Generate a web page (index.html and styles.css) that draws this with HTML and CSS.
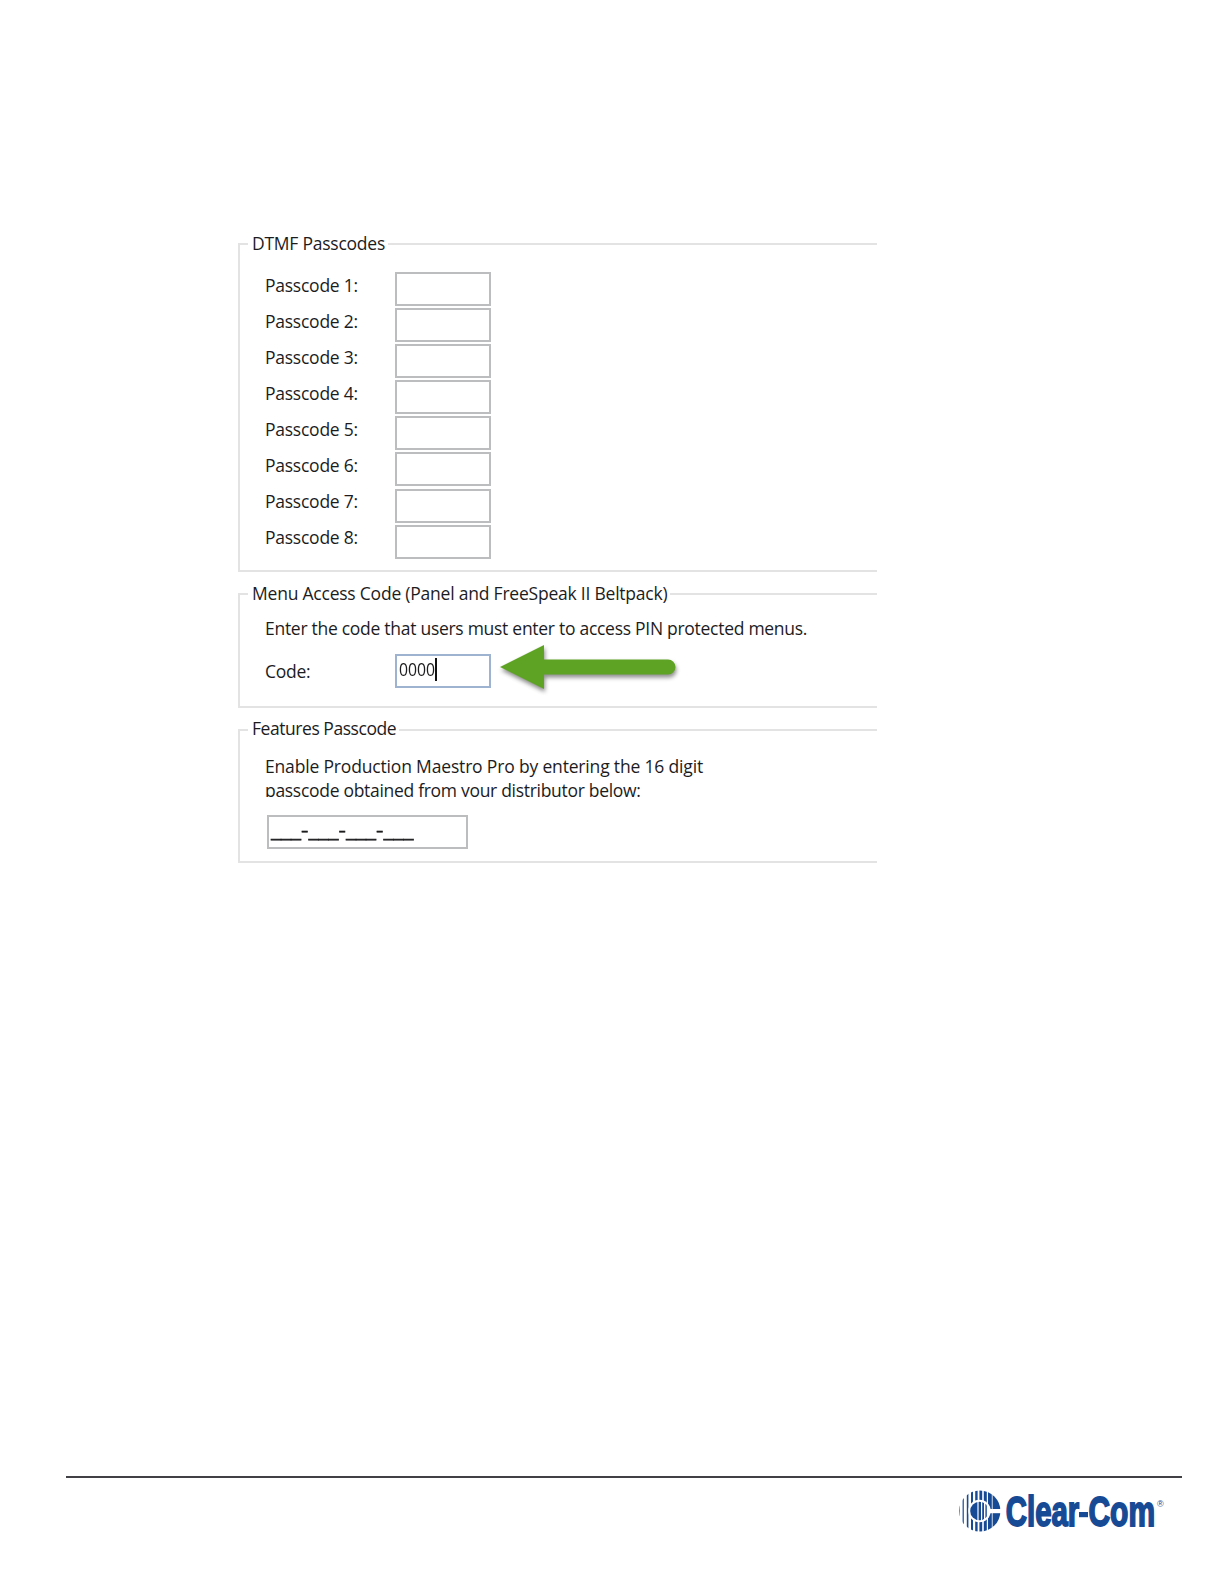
FILE: index.html
```html
<!DOCTYPE html>
<html lang="en">
<head>
  <meta charset="UTF-8">
  <meta name="viewport" content="width=device-width, initial-scale=1.0">
  <title>Clear-Com Passcodes</title>
  <link rel="stylesheet" href="styles.css">
</head>
<body>
  <main>
    <fieldset class="dtmf">
      <legend>DTMF Passcodes</legend>
      <div class="row"><label for="p1">Passcode 1:</label><input type="text" id="p1"></div>
      <div class="row"><label for="p2">Passcode 2:</label><input type="text" id="p2"></div>
      <div class="row"><label for="p3">Passcode 3:</label><input type="text" id="p3"></div>
      <div class="row"><label for="p4">Passcode 4:</label><input type="text" id="p4"></div>
      <div class="row"><label for="p5">Passcode 5:</label><input type="text" id="p5"></div>
      <div class="row"><label for="p6">Passcode 6:</label><input type="text" id="p6"></div>
      <div class="row"><label for="p7">Passcode 7:</label><input type="text" id="p7"></div>
      <div class="row"><label for="p8">Passcode 8:</label><input type="text" id="p8"></div>
    </fieldset>

    <fieldset class="access">
      <legend>Menu Access Code (Panel and FreeSpeak II Beltpack)</legend>
      <p>Enter the code that users must enter to access PIN protected menus.</p>
      <div class="row">
        <label>Code:</label>
        <div class="field active"><span class="digits">0000</span><span class="caret"></span></div>
        <svg class="arrow" width="190" height="56" viewBox="0 0 190 56">
          <path d="M4 22 L48 0 V14.5 H172 A7.5 7.5 0 0 1 172 29.5 H48 V44 Z" fill="#5fa325"/>
        </svg>
      </div>
    </fieldset>

    <fieldset class="features">
      <legend>Features Passcode</legend>
      <p>Enable Production Maestro Pro by entering the 16 digit<br><span class="second">passcode obtained from your distributor below:</span></p>
      <div class="field wide"><span class="mask">___-___-___-___</span></div>
    </fieldset>
  </main>

  <footer>
    <svg class="logo" width="220" height="60" viewBox="0 0 220 60">
      <defs>
        <clipPath id="disc"><circle cx="20.8" cy="21" r="20.6"/></clipPath>
        <clipPath id="core"><circle cx="20.5" cy="21" r="9.3"/></clipPath>
      </defs>
      <g clip-path="url(#disc)" fill="#174a94">
        <rect x="0" y="0" width=".8" height="42"/>
        <rect x="3.6" y="0" width="1.2" height="42"/>
        <rect x="7.8" y="0" width="1.6" height="42"/>
        <rect x="12" y="0" width="2" height="42"/>
        <rect x="16.2" y="0" width="2.4" height="42"/>
        <rect x="20.4" y="0" width="2.8" height="42"/>
        <rect x="24.8" y="0" width="3" height="42"/>
        <rect x="29" y="0" width="3.8" height="42"/>
        <rect x="33.6" y="0" width="9" height="42"/>
      </g>
      <circle cx="20.5" cy="21" r="11.2" fill="#fff"/>
      <rect x="29" y="19" width="13" height="4.2" fill="#fff"/>
      <g clip-path="url(#core)" fill="#174a94">
        <rect x="11" y="10" width="7.4" height="22"/>
        <rect x="19.6" y="10" width="2.4" height="22"/>
        <rect x="23.2" y="10" width="1.8" height="22"/>
        <rect x="26.4" y="10" width="1.4" height="22"/>
      </g>
      <text class="brand" x="46.8" y="35.6" textLength="73.5" lengthAdjust="spacingAndGlyphs">Clear</text>
      <rect x="120" y="22" width="9" height="5.2" fill="#174a94"/>
      <text class="brand" x="129.5" y="35.6" textLength="66.5" lengthAdjust="spacingAndGlyphs">Com</text>
      <text class="reg" x="198" y="17">®</text>
    </svg>
  </footer>
</body>
</html>
```
FILE: styles.css
```css
* {
  box-sizing: border-box;
}
body {
  margin: 0;
  height: 1584px;
  display: flex;
  flex-direction: column;
  justify-content: space-between;
  background: #fff;
  color: #1c1c1e;
  font: 17.5px/24px "Open Sans", "Noto Sans", sans-serif;
  letter-spacing: -0.24px;
}
main {
  width: 639px;
  margin: 232px 0 0 238px;
}
fieldset {
  margin: 0 0 10px;
  padding: 0 0 0 8px;
  border: 2px solid #e3e3e3;
  border-right: none;
}
legend {
  padding: 1px 3px 2px 4px;
  line-height: 21px;
}
.dtmf {
  height: 340px;
}
.access {
  height: 126px;
}
.access legend {
  letter-spacing: -0.22px;
}
.features {
  height: 145px;
}
.features legend {
  padding: 0 3px 3px 4px;
  letter-spacing: -0.45px;
}
p {
  margin: 0 0 0 17px;
  white-space: nowrap;
}
.row {
  display: flex;
  height: 36.1px;
  margin-left: 17px;
}
.row label {
  width: 130px;
  padding-top: 0.6px;
}
input, .field {
  width: 96px;
  height: 34px;
  padding: 0 3px;
  border: 2px solid #bcbdbf;
  background: #fff;
}
.dtmf legend + .row {
  margin-top: 16px;
}

/* menu access code */
.access p {
  padding-top: 9.6px;
  letter-spacing: -0.28px;
}
.access .row {
  margin-top: 14.4px;
}
.access label {
  padding-top: 5px;
}
.active {
  display: flex;
  padding: 1px 2px;
  border-color: #9db3d0;
}
.digits {
  width: 36px;
  letter-spacing: 0;
  transform: scaleX(0.9);
  transform-origin: left;
}
.caret {
  width: 2px;
  height: 23px;
  margin-top: 1px;
  background: #111;
}
.arrow {
  margin: -9px 0 0 5px;
  overflow: visible;
  filter: drop-shadow(1px 3px 2px rgba(0, 0, 0, 0.45));
}

/* features */
.features p {
  height: 55px;
  padding-top: 12px;
  line-height: 24.3px;
  letter-spacing: -0.17px;
  overflow: hidden;
}
.second {
  letter-spacing: -0.3px;
}
.wide {
  width: 201px;
  margin: 18px 0 0 19px;
  padding: 1px 2px;
}
.mask {
  display: inline-block;
  letter-spacing: 0;
  transform: scaleX(1.31);
  transform-origin: left;
  -webkit-text-stroke: 0.5px #1c1c1e;
}

footer {
  height: 108px;
  margin: 0 42px 0 66px;
  border-top: 2px solid #404045;
}
.logo {
  display: block;
  margin: 12px 0 0 893px;
  overflow: visible;
}
.brand {
  font: bold 42px "Liberation Sans Narrow", "Liberation Sans", sans-serif;
  letter-spacing: 0;
  fill: #174a94;
  stroke: #174a94;
  stroke-width: 1.8px;
}
.reg {
  font: 9px "Liberation Sans", sans-serif;
  letter-spacing: 0;
  fill: #174a94;
}
```
